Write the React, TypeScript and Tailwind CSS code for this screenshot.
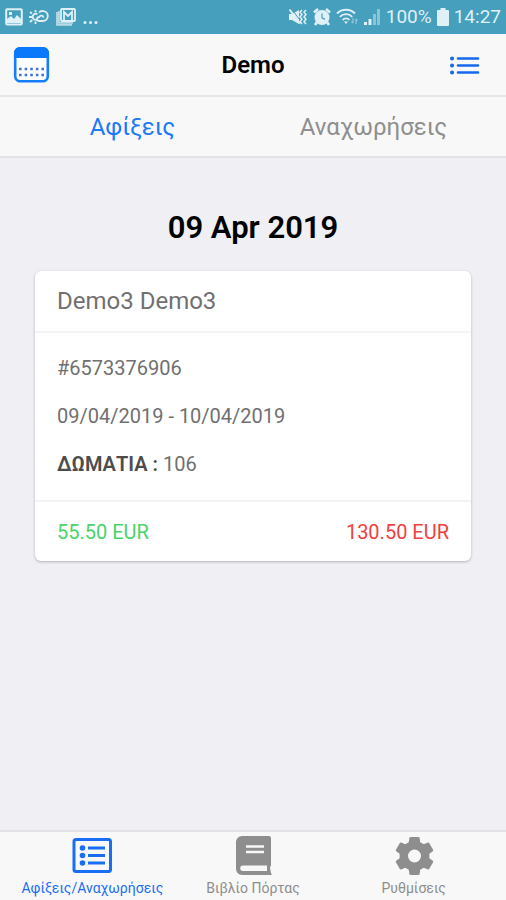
import type { ReactNode } from "react";

const bookings = [
  {
    id: "6573376906",
    guest: "Demo3 Demo3",
    dates: "09/04/2019 - 10/04/2019",
    rooms: "106",
    paid: "55.50 EUR",
    due: "130.50 EUR",
  },
];

export default function App() {
  return (
    <div className="min-h-screen flex flex-col bg-[#efeff4] font-[Roboto,sans-serif] text-black">
      <StatusBar />

      <header className="h-[63px] px-3 grid grid-cols-[1fr_auto_1fr] items-center bg-[#f8f8f8] border-b-2 border-[#e6e6e6]">
        <button type="button" aria-label="Calendar" className="justify-self-start">
          <CalendarIcon />
        </button>
        <h1 className="text-[24px] leading-8 font-semibold">Demo</h1>
        <button type="button" aria-label="Menu" className="justify-self-end mr-3.5">
          <ListIcon />
        </button>
      </header>

      <nav className="h-[61px] px-3 grid grid-cols-2 bg-[#f8f8f8] border-b-2 border-[#e2e2e4] text-[24px]">
        <button type="button" className="text-[#1a7af8]">Αφίξεις</button>
        <button type="button" className="text-[#8e8e8e]">Αναχωρήσεις</button>
      </nav>

      <main className="flex-1 px-[35px] pt-12">
        <h2 className="text-center text-[31px] leading-11 font-semibold">09 Apr 2019</h2>
        {bookings.map((booking) => (
          <BookingCard key={booking.id} booking={booking} />
        ))}
      </main>

      <footer className="h-[70px] px-3 grid grid-cols-3 bg-[#f8f8f8] border-t-2 border-[#e2e2e4]">
        <TabButton label="Αφίξεις/Αναχωρήσεις" icon={<ListBoxIcon />} active />
        <TabButton label="Βιβλίο Πόρτας" icon={<BookIcon />} />
        <TabButton label="Ρυθμίσεις" icon={<GearIcon />} />
      </footer>
    </div>
  );
}

function BookingCard({ booking }: { booking: (typeof bookings)[number] }) {
  return (
    <article className="mt-[21px] bg-white rounded-md shadow-[0_1px_3px_rgba(0,0,0,0.25)] text-[20px] leading-6 text-[#707070]">
      <h3 className="h-[62px] px-[22px] flex items-center text-[24px] border-b-2 border-[#f5f5f5]">{booking.guest}</h3>
      <div className="px-[22px] pt-[23px] pb-6 flex flex-col gap-6 border-b-2 border-[#f3f3f5]">
        <p>#{booking.id}</p>
        <p>{booking.dates}</p>
        <p>
          <strong className="font-semibold text-[#4c4c4c]">ΔΩΜΑΤΙΑ :</strong> {booking.rooms}
        </p>
      </div>
      <div className="h-[59px] px-[22px] flex items-center justify-between">
        <span className="text-[#48d468]">{booking.paid}</span>
        <span className="text-[#f53d3d]">{booking.due}</span>
      </div>
    </article>
  );
}

function TabButton({ label, icon, active }: { label: string; icon: ReactNode; active?: boolean }) {
  return (
    <button
      type="button"
      className={`flex flex-col items-center pt-1 whitespace-nowrap text-[14px] leading-5 ${active ? "text-[#1a6ef5]" : "text-[#8e8e8e]"}`}
    >
      {icon}
      <span className="mt-0.5">{label}</span>
    </button>
  );
}

function StatusBar() {
  return (
    <div className="h-[34px] px-[5px] flex items-center justify-between bg-[#469fbd] text-[#dff0f6] text-[19px] leading-6">
      <div className="flex items-center gap-[6px]">
        <svg width="18" height="18" viewBox="0 0 18 18" fill="none" stroke="currentColor">
          <rect x="1.2" y="1.2" width="15.6" height="15.2" rx="1" strokeWidth="2" />
          <path d="M2 14V11l4-3 3 3 3-4 4 4v4H2z" fill="currentColor" stroke="none" />
          <rect x="4" y="4" width="3" height="3" fill="currentColor" stroke="none" />
        </svg>
        <svg width="20" height="18" viewBox="0 0 20 18" fill="none" stroke="currentColor" strokeWidth="1.8">
          <path d="M8.5 6.4A3 3 0 1 0 8.5 11.2M1 4l2 1.5M0 9h3M1 14l2.3-2M6.5 16v-2.5M6.5 2v2.3" />
          <path d="M10 4.5C12 2 18.8 2.5 18.8 8c0 3-2.3 5-5 5h-3.5c-3 0-3-4 0-4 .8-2 4-1.8 4.2.6" />
        </svg>
        <svg width="22" height="18" viewBox="0 0 20 18" fill="none" stroke="currentColor" strokeWidth="1.8">
          <path d="M1 4v12.8h15M2.9 3v11.8h14" opacity="0.75" />
          <rect x="5" y="1" width="14" height="12" rx="1" />
          <path d="M8 12V4l4 4 4-4v8" />
        </svg>
        <svg width="16" height="18" viewBox="0 0 16 18" fill="currentColor" role="img" aria-label="More notifications">
          <circle cx="2" cy="14.5" r="1.5" />
          <circle cx="7.5" cy="14.5" r="1.5" />
          <circle cx="13" cy="14.5" r="1.5" />
        </svg>
      </div>
      <div className="flex items-center gap-[5px]">
        <svg width="20" height="18" viewBox="0 0 20 18" fill="currentColor">
          <path d="M1 6h3l7-4v14l-7-4H1z" />
          <path d="M3.5 1 13 13.5" stroke="#469fbd" strokeWidth="1" />
          <path d="M1.5 1.5 12 15.5" stroke="currentColor" strokeWidth="2" />
          <path d="M14 2l-2 2.3 2 2.3-2 2.4 2 2.3-2 2.4 2 2.3M18 2l-2 2.3 2 2.3-2 2.4 2 2.3-2 2.4 2 2.3" fill="none" stroke="currentColor" strokeWidth="1.5" />
        </svg>
        <svg width="18" height="18" viewBox="0 0 18 18" fill="none" stroke="currentColor">
          <circle cx="9" cy="9.5" r="7.5" fill="currentColor" stroke="none" />
          <path d="M1 4.5 5 1M17 4.5 13 1M4 14l-2 3M14 14l2 3" strokeWidth="2.6" />
          <path d="M9 5.5v4.4l3 1.5" stroke="#469fbd" strokeWidth="1.2" />
        </svg>
        <svg width="22" height="18" viewBox="0 0 22 18" fill="none" stroke="currentColor" strokeWidth="1.8">
          <path d="M1 5.5C6 .5 14 .5 19 5.5M3.8 8.8c3.5-3.7 9-3.7 12.4 0M6.6 12c2-2.2 4.8-2.2 6.8 0" />
          <path d="M8 13.5 10 16l2-2.5z" fill="currentColor" stroke="none" />
          <path d="M17 10v5M15.5 13.5 17 15.2M20 16v-5M20 11l1.5 1.5" strokeWidth="1.2" opacity="0.5" />
        </svg>
        <svg width="18" height="18" viewBox="0 0 18 18" fill="currentColor">
          <path d="M1 14h3v3H1zM5.5 11h3v6h-3z" />
          <path d="M10 6h3v11h-3zM14 1h3v16h-3z" opacity="0.45" />
        </svg>
        <span>100%</span>
        <svg width="12" height="18" viewBox="0 0 12 18" fill="currentColor">
          <path d="M3.5 0h5v2H11a1 1 0 0 1 1 1v14a1 1 0 0 1-1 1H1a1 1 0 0 1-1-1V3a1 1 0 0 1 1-1h2.5z" />
        </svg>
        <span>14:27</span>
      </div>
    </div>
  );
}

function CalendarIcon() {
  return (
    <svg width="38" height="38" viewBox="0 0 38 38">
      <rect x="3.2" y="2.2" width="32.6" height="33" rx="5" fill="#fff" stroke="#147efb" strokeWidth="2.6" />
      <path d="M2 12V7a6 6 0 0 1 6-6h23a6 6 0 0 1 6 6v5z" fill="#0a78fb" />
      <path d="M7 23h26M7 29h26" stroke="#3f6fe0" strokeWidth="2.6" strokeDasharray="2.6 3" />
    </svg>
  );
}

function ListIcon() {
  return (
    <svg width="30" height="20" viewBox="0 0 30 20" fill="none" stroke="#1668f0" strokeWidth="2.6" strokeLinecap="round">
      <path d="M8 3.5h20M8 10.5h20M8 17.5h20" />
      <path d="M2 3.5h.1M2 10.5h.1M2 17.5h.1" strokeWidth="4" />
    </svg>
  );
}

function ListBoxIcon() {
  return (
    <svg width="40" height="40" viewBox="0 0 40 40" fill="none" stroke="currentColor" strokeWidth="3">
      <rect x="2" y="3.5" width="36.5" height="32" rx="2" />
      <path d="M16 12h17M16 19.5h17M16 27h17" />
      <g fill="currentColor" stroke="none">
        <circle cx="10.5" cy="12" r="2.8" />
        <circle cx="10.5" cy="19.5" r="2.8" />
        <circle cx="10.5" cy="27" r="2.8" />
      </g>
    </svg>
  );
}

function BookIcon() {
  return (
    <svg width="40" height="40" viewBox="0 0 40 40">
      <path d="M9 0h27a2 2 0 0 1 2 2v27l-1 3 1 5a1 1 0 0 1-1 2H9a6 6 0 0 1-6-6V6a6 6 0 0 1 6-6z" fill="currentColor" />
      <path d="M13 10.5h18M13 16h18" stroke="#f8f8f8" strokeWidth="2.6" />
      <path d="M10 29.5h24V35H10a2.7 2.7 0 0 1 0-5.5z" fill="#f8f8f8" />
    </svg>
  );
}

function GearIcon() {
  return (
    <svg width="40" height="40" viewBox="0 0 40 40" fill="currentColor">
      <path
        fillRule="evenodd"
        d="M16.5 1h8q1 0 1.1 1l.6 4.200 3.6 2.100 4-1.700q1-.3 1.5.6l3.8 6.500q.5.900-.3 1.500l-3.400 2.600v4.400l3.400 2.600q.8.600.3 1.500l-3.8 6.500q-.5.900-1.500.6l-4-1.700-3.600 2.100-.6 4.200q-.1 1-1.100 1h-8q-1 0-1.100-1l-.6-4.200-3.600-2.100-4 1.700q-1 .3-1.500-.6l-3.800-6.500q-.5-.9.3-1.500l3.400-2.600v-4.400l-3.400-2.600q-.8-.6-.3-1.500l3.800-6.500q.5-.9 1.500-.6l4 1.700 3.600-2.100.6-4.200q.1-1 1.100-1zM20.500 13.500a6.500 6.500 0 1 0 0 13 6.500 6.500 0 0 0 0-13z"
      />
    </svg>
  );
}
